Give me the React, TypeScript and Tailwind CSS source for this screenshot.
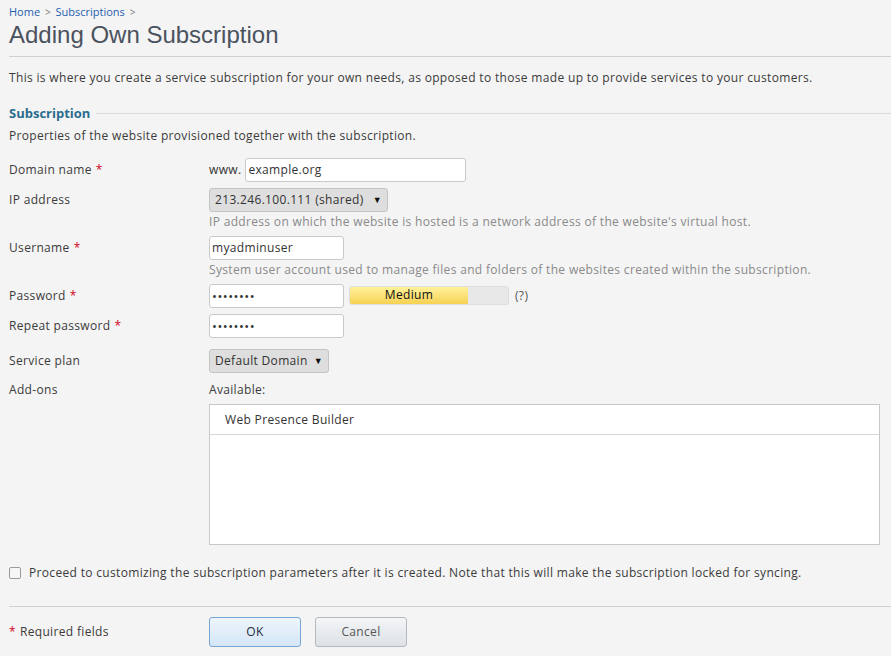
import React from 'react';

const Req = () => <span className="text-[#d0021b] ml-1">*</span>;

const Row: React.FC<{ label: string; req?: boolean; top?: string; children: React.ReactNode }> = ({
  label,
  req,
  top = 'pt-[4px]',
  children,
}) => (
  <div className="flex">
    <div className={`w-[200px] shrink-0 ${top}`}>
      {label}
      {req && <Req />}
    </div>
    <div className="flex-1 min-w-0">{children}</div>
  </div>
);

const Select: React.FC<{ value: string; gap?: string }> = ({ value, gap = 'gap-[9px]' }) => (
  <div className={`inline-flex items-center h-[24px] px-[5px] ${gap} rounded-[3px] border border-[#c4c4c4] bg-[#dedede] text-[#333]`}>
    <span>{value}</span>
    <span className="text-[9px] text-[#111]">▼</span>
  </div>
);

const Input: React.FC<{ value: string; w: string; pwd?: boolean }> = ({ value, w, pwd }) => (
  <div
    className={`${w} h-[24px] flex items-center px-[2px] rounded-[3px] border border-[#c9c9c9] bg-white text-[#333] ${
      pwd ? 'tracking-[0.5px] text-[13px]' : ''
    }`}
  >
    {value}
  </div>
);

export default function App() {
  return (
    <div
      className="min-h-[656px] bg-[#f4f4f4] pl-[9px] text-[12px] leading-[16px] tracking-[0.33px] text-[#3b3b3b]"
      style={{ fontFamily: '"Open Sans", "Noto Sans", sans-serif' }}
    >
      <div className="pt-[4px] text-[11px] tracking-normal text-[#1f5fb0]">
        Home <span className="text-[#777] text-[10px] mx-[2px]">&gt;</span> Subscriptions{' '}
        <span className="text-[#777] text-[10px] mx-[2px]">&gt;</span>
      </div>
      <h1
        className="text-[24px] leading-[30px] tracking-normal text-[#4a525e] pb-[6px] border-b border-[#cfcfcf]"
        style={{ fontFamily: '"Liberation Sans", Arial, sans-serif' }}
      >
        Adding Own Subscription
      </h1>
      <p className="mt-[13px]">
        This is where you create a service subscription for your own needs, as opposed to those made up to provide
        services to your customers.
      </p>

      <div className="mt-[19px] flex items-center gap-[6px]">
        <span className="font-bold text-[13px] tracking-normal text-[#2a6d8e]">Subscription</span>
        <div className="flex-1 h-px bg-[#dcdcdc]" />
      </div>
      <p className="mt-[7px]">Properties of the website provisioned together with the subscription.</p>

      <div className="mt-[14px] flex flex-col gap-[6px] pr-[11px]">
        <Row label="Domain name" req>
          <div className="flex items-center gap-[4px]">
            <span className="text-[#333]">www.</span>
            <Input value="example.org" w="w-[221px]" />
          </div>
        </Row>
        <Row label="IP address">
          <Select value="213.246.100.111 (shared)" />
          <div className="mt-[2px] text-[#8a8a8a]">
            IP address on which the website is hosted is a network address of the website's virtual host.
          </div>
        </Row>
        <Row label="Username" req>
          <Input value="myadminuser" w="w-[135px]" />
          <div className="mt-[2px] text-[#8a8a8a]">
            System user account used to manage files and folders of the websites created within the subscription.
          </div>
        </Row>
        <Row label="Password" req>
          <div className="flex items-center">
            <Input value="••••••••" w="w-[135px]" pwd />
            <div className="ml-[5px] mb-[2px] w-[160px] h-[19px] rounded-[3px] bg-[#e8e8e8] border border-[#dedede] flex overflow-hidden">
              <div className="w-[118px] h-full bg-gradient-to-b from-[#fff29a] to-[#f6d152] flex items-center justify-center text-[#111]">
                Medium
              </div>
            </div>
            <span className="ml-[6px] text-[#555]">(?)</span>
          </div>
        </Row>
        <Row label="Repeat password" req>
          <Input value="••••••••" w="w-[135px]" pwd />
        </Row>
        <Row label="Service plan" top="pt-[4px] mt-[5px]">
          <div className="mt-[5px]">
            <Select value="Default Domain" gap="gap-[6px]" />
          </div>
        </Row>
        <Row label="Add-ons" top="pt-[3px]">
          <div className="pt-[3px]">Available:</div>
          <div className="mt-[6px] h-[141px] border border-[#c8c8c8] bg-white">
            <div className="h-[30px] flex items-center pl-[15px] border-b border-[#d6d6d6] text-[#333]">
              Web Presence Builder
            </div>
          </div>
        </Row>
      </div>

      <label className="mt-[20px] flex items-center gap-[8px]">
        <span className="w-[12px] h-[12px] rounded-[2px] border border-[#9a9a9a] bg-[#f6f6f6]" />
        <span>
          Proceed to customizing the subscription parameters after it is created. Note that this will make the
          subscription locked for syncing.
        </span>
      </label>

      <div className="mt-[25px] border-t border-[#cfcfcf] pt-[10px] flex items-center">
        <div className="w-[200px] shrink-0">
          <span className="text-[#d0021b] mr-[4px]">*</span>Required fields
        </div>
        <button className="w-[92px] h-[30px] rounded-[3px] border border-[#78a6d2] bg-gradient-to-b from-[#eef5fc] to-[#d4e6f6] text-[#1e2d3d]">
          OK
        </button>
        <button className="ml-[14px] w-[92px] h-[30px] rounded-[3px] border border-[#b4b9bf] bg-gradient-to-b from-[#f3f5f7] to-[#dde1e5] text-[#555]">
          Cancel
        </button>
      </div>
    </div>
  );
}
